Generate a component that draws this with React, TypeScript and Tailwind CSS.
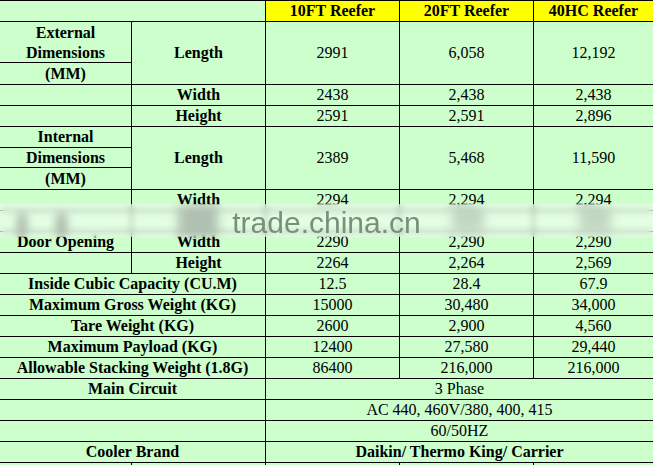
import React from "react";

const B = "border-r border-b border-black flex items-center justify-center";

function V({ children, bold, span }: { children?: React.ReactNode; bold?: boolean; span?: string }) {
  return <div className={`${B} ${bold ? "font-bold" : ""} ${span ?? ""}`}>{children}</div>;
}

type Row = [string, string, string, string, string];

const rowsA: Row[] = [
  ["", "Width", "2438", "2,438", "2,438"],
  ["", "Height", "2591", "2,591", "2,896"],
];
const rowsB: Row[] = [
  ["", "Width", "2294", "2,294", "2,294"],
  ["", "", "", "", ""],
  ["Door Opening", "Width", "2290", "2,290", "2,290"],
  ["", "Height", "2264", "2,264", "2,569"],
];
const rowsC: [string, string, string, string][] = [
  ["Inside Cubic Capacity (CU.M)", "12.5", "28.4", "67.9"],
  ["Maximum Gross Weight (KG)", "15000", "30,480", "34,000"],
  ["Tare Weight (KG)", "2600", "2,900", "4,560"],
  ["Maximum Payload (KG)", "12400", "27,580", "29,440"],
  ["Allowable Stacking Weight (1.8G)", "86400", "216,000", "216,000"],
];

function Simple({ r }: { r: Row }) {
  return (
    <>
      <V bold>{r[0]}</V>
      <V bold>{r[1]}</V>
      <V>{r[2]}</V>
      <V>{r[3]}</V>
      <V>{r[4]}</V>
    </>
  );
}

function Dim({ title, split }: { title: string; split: "ext" | "int" }) {
  if (split === "ext") {
    return (
      <div className="row-span-3 border-r border-b border-black flex flex-col font-bold">
        <div className="h-[41px] border-b border-black flex flex-col items-center justify-center leading-[20px] pt-[1px]">
          <span>{title}</span>
          <span>Dimensions</span>
        </div>
        <div className="flex-1 flex items-center justify-center">(MM)</div>
      </div>
    );
  }
  return (
    <div className="row-span-3 border-r border-b border-black flex flex-col font-bold">
      <div className="h-[21px] border-b border-black flex items-center justify-center">{title}</div>
      <div className="h-[20px] border-b border-black flex items-center justify-center">Dimensions</div>
      <div className="flex-1 flex items-center justify-center">(MM)</div>
    </div>
  );
}

export default function App() {
  return (
    <div
      className="relative w-[653px] h-[465px] overflow-hidden bg-[#ccffcc] text-black text-[16px] leading-[20px] border-t border-black"
      style={{ fontFamily: '"Liberation Serif", "Times New Roman", serif' }}
    >
      <div className="grid grid-cols-[132px_134px_134px_134px_120px] auto-rows-[21px]">
        <div className={`${B} col-span-2`}></div>
        <div className={`${B} bg-[#ffff00] font-bold`}>10FT Reefer</div>
        <div className={`${B} bg-[#ffff00] font-bold`}>20FT Reefer</div>
        <div className={`${B} bg-[#ffff00] font-bold`}>40HC Reefer</div>

        <Dim title="External" split="ext" />
        <V bold span="row-span-3">Length</V>
        <V span="row-span-3">2991</V>
        <V span="row-span-3">6,058</V>
        <V span="row-span-3">12,192</V>
        {rowsA.map((r, i) => (
          <Simple key={i} r={r} />
        ))}

        <Dim title="Internal" split="int" />
        <V bold span="row-span-3">Length</V>
        <V span="row-span-3">2389</V>
        <V span="row-span-3">5,468</V>
        <V span="row-span-3">11,590</V>
        {rowsB.map((r, i) => (
          <Simple key={i} r={r} />
        ))}

        {rowsC.map((r, i) => (
          <React.Fragment key={i}>
            <V bold span="col-span-2">{r[0]}</V>
            <V>{r[1]}</V>
            <V>{r[2]}</V>
            <V>{r[3]}</V>
          </React.Fragment>
        ))}

        <V bold span="col-span-2">Main Circuit</V>
        <V span="col-span-3">3 Phase</V>
        <V span="col-span-2"></V>
        <V span="col-span-3">AC 440, 460V/380, 400, 415</V>
        <V span="col-span-2"></V>
        <V span="col-span-3">60/50HZ</V>
        <V bold span="col-span-2">Cooler Brand</V>
        <V bold span="col-span-3">Daikin/ Thermo King/ Carrier</V>

        <V></V>
        <V></V>
        <V></V>
        <V></V>
        <V></V>
      </div>

      {/* blurred remnants of the covered row */}
      <div className="absolute left-[17px] top-[213px] w-[10px] h-[20px] bg-black/50 blur-[3px]"></div>
      <div className="absolute left-[56px] top-[213px] w-[11px] h-[20px] bg-black/50 blur-[3px]"></div>
      <div className="absolute left-[178px] top-[207px] w-[40px] h-[26px] bg-black/45 blur-[4px]"></div>
      <div className="absolute left-[452px] top-[209px] w-[32px] h-[20px] bg-black/30 blur-[4px]"></div>
      <div className="absolute left-[579px] top-[209px] w-[32px] h-[20px] bg-black/30 blur-[4px]"></div>

      <div className="absolute left-0 right-0 top-[203px] h-[33px] bg-white/45 backdrop-blur-[3px]"></div>
      <div
        className="absolute left-0 right-0 top-[211px] text-center text-[30px] leading-[21px] text-[#7b8d7b]"
        style={{ fontFamily: '"Liberation Sans", Arial, sans-serif' }}
      >
        trade.china.cn
      </div>
    </div>
  );
}
